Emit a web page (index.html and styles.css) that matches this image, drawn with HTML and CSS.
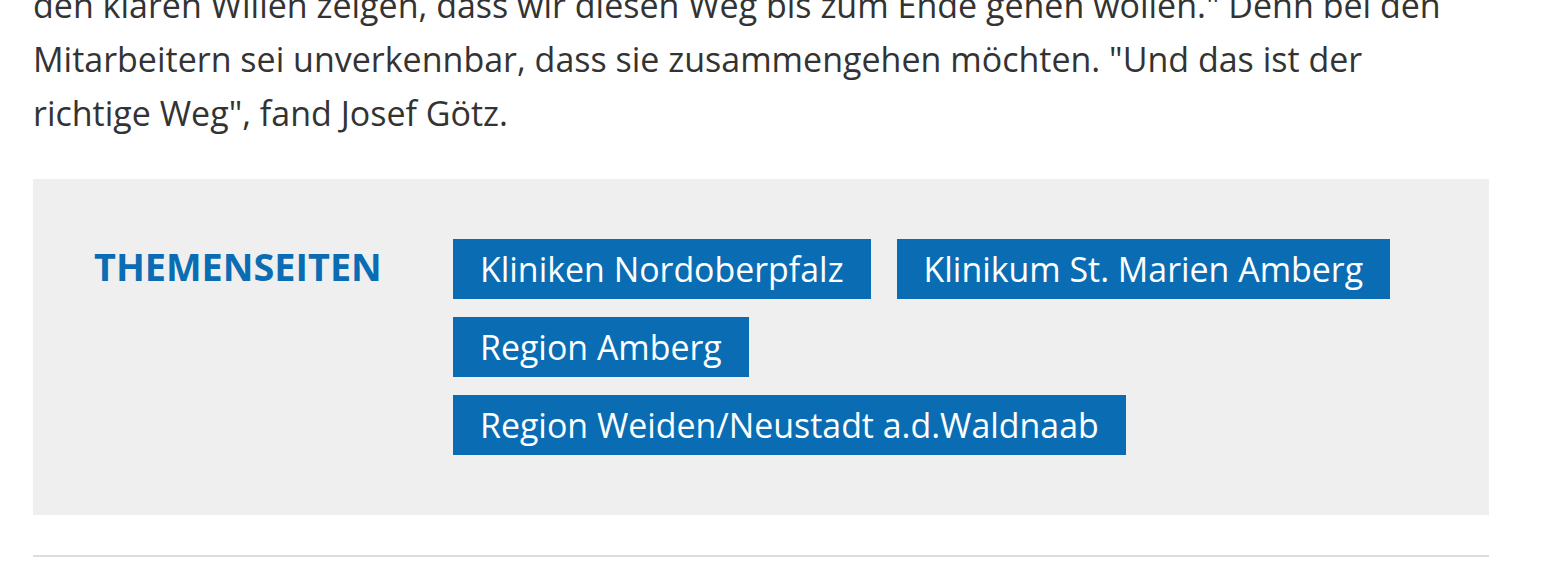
FILE: index.html
```html
<!DOCTYPE html>
<html lang="de">
<head>
  <meta charset="UTF-8">
  <title>Kliniken Nordoberpfalz</title>
  <link rel="stylesheet" href="styles.css">
</head>
<body>
  <article class="article">
    <p class="article-text">den klaren Willen zeigen, dass wir diesen Weg bis zum Ende gehen wollen." Denn bei den Mitarbeitern sei unverkennbar, dass sie zusammengehen möchten. "Und das ist der richtige Weg", fand Josef Götz.</p>

    <section class="topics">
      <h3 class="topics-title">Themenseiten</h3>
      <ul class="topics-list">
        <li><a href="#" class="topic-tag">Kliniken Nordoberpfalz</a></li>
        <li><a href="#" class="topic-tag">Klinikum St. Marien Amberg</a></li>
        <li><a href="#" class="topic-tag">Region Amberg</a></li>
        <li><a href="#" class="topic-tag">Region Weiden/Neustadt a.d.Waldnaab</a></li>
      </ul>
    </section>

    <hr class="divider">
  </article>
</body>
</html>
```

FILE: styles.css
```css
body {
  margin: 0;
  font-family: 'Open Sans', 'Liberation Sans', sans-serif;
  color: #333;
  background-color: #fff;
}
.article {
  width: 1456px;
  margin-left: 33px;
  margin-top: -22px;
}
.article-text {
  margin: 0;
  font-size: 34px;
  line-height: 54px;
  padding-right: 16px;
}
.topics {
  display: flex;
  align-items: flex-start;
  margin-top: 39px;
  padding: 60px 60px 60px 61px;
  background-color: #efefef;
}
.topics-title {
  flex: 0 0 359px;
  margin: 0;
  padding-top: 6px;
  font-size: 37.8px;
  font-weight: 700;
  line-height: 44px;
  text-transform: uppercase;
  color: #0a6db4;
}
.topics-list {
  display: flex;
  flex-wrap: wrap;
  gap: 18px 26px;
  margin: 0;
  padding: 0;
  list-style: none;
}
.topic-tag {
  display: block;
  padding: 0 27px;
  height: 60px;
  line-height: 60px;
  font-size: 33.9px;
  color: #fff;
  text-decoration: none;
  background-color: #0a6db4;
}
.divider {
  margin: 40px 0 0;
  border: none;
  border-top: 2px solid #ddd;
}
```
